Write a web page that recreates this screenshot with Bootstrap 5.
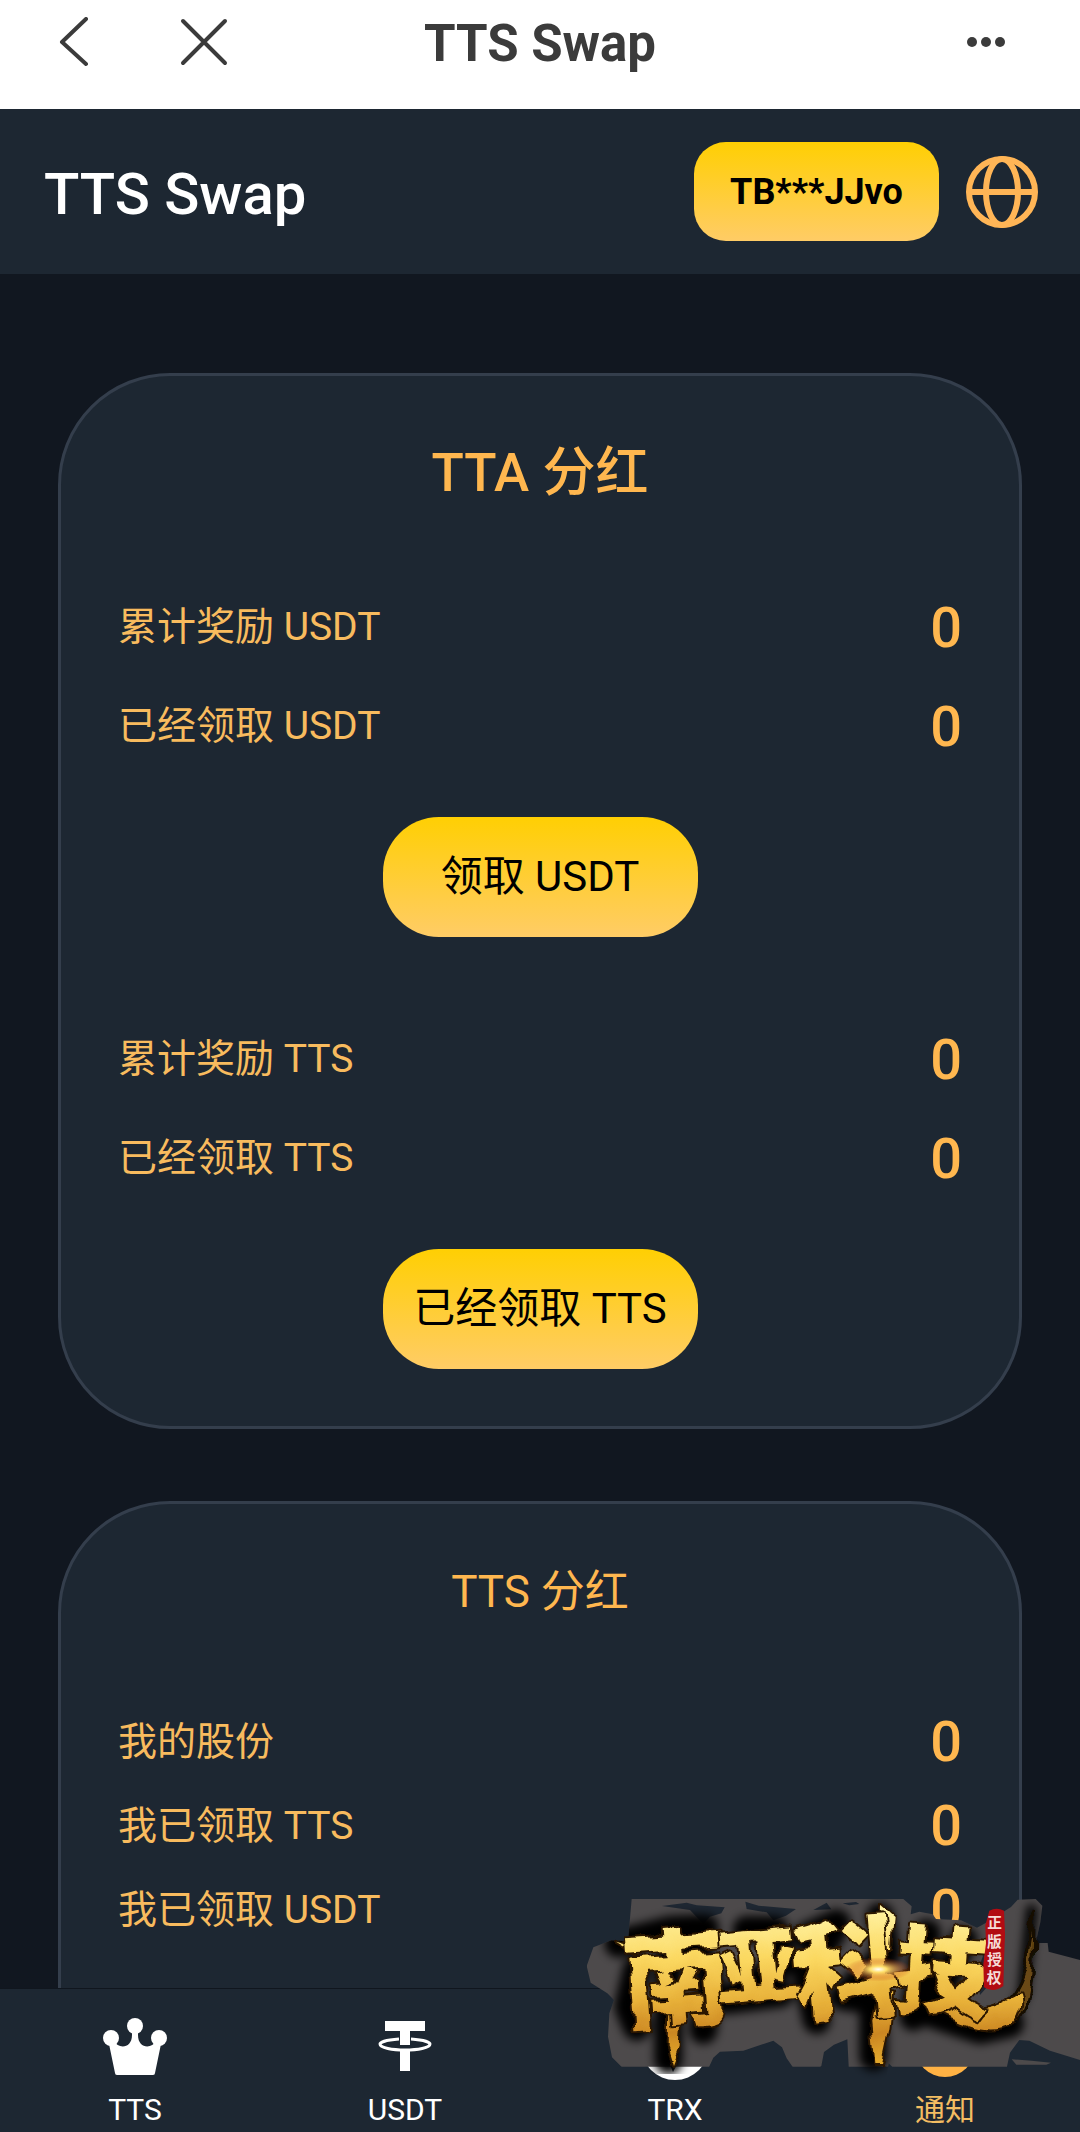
<!DOCTYPE html>
<html lang="zh-CN">
<head>
<meta charset="utf-8">
<meta name="viewport" content="width=device-width, initial-scale=1">
<title>TTS Swap</title>
<link rel="stylesheet" href="https://cdn.jsdelivr.net/npm/bootstrap@5.3.0/dist/css/bootstrap.min.css">
<script src="https://cdn.jsdelivr.net/npm/bootstrap@5.3.0/dist/js/bootstrap.bundle.min.js"></script>
<style>
  :root { --panel: #1d2732; --night: #111720; --gold: #ffb74f; --line: #343e4c; }
  body { font-family: Roboto, "Noto Sans CJK SC", sans-serif; background: var(--night); color: #fff; }
  .plain-btn { background: none; border: 0; padding: 0; line-height: 0; }
  .app-top { height: 109px; padding: 0 56px 26px; background: #fff; color: #3b3b3b; }
  .app-side { flex: 1 1 0; gap: 88px; }
  .app-title { font-size: 51px; line-height: 60px; font-weight: 700; margin: 0; padding-top: 4px; }
  .brand-bar { height: 165px; padding: 0 42px 0 44px; background: var(--panel); }
  .brand-name { font-size: 58px; line-height: 70px; font-weight: 500; color: #fff; text-decoration: none; padding-top: 4px; }
  .gold-btn { background: linear-gradient(#ffcf03, #ffcc66); color: #000; border: 0; }
  .wallet-btn { width: 245px; height: 99px; border-radius: 32px; font-size: 36px; font-weight: 700; }
  .feed { overflow-y: auto; scrollbar-width: none; padding: 99px 58px 0; gap: 72px; min-height: 0; }
  .feed::-webkit-scrollbar { display: none; }
  .bonus { flex: none; background: var(--panel); border: 3px solid var(--line); border-radius: 112px; padding: 56px 57px; color: var(--gold); }
  .bonus h2 { font-size: 53px; line-height: 82px; font-weight: 500; margin: 0 0 64px; }
  .bonus h2.light-title { font-size: 44px; line-height: 64px; font-weight: 400; margin-bottom: 76px; }
  .figure-row { height: 99px; font-size: 39px; }
  .figure-row dt { font-weight: 400; color: #f8bb5e; }
  .figure-row dd { margin: 0; font-size: 56px; font-weight: 500; }
  .tight { margin-bottom: 120px; }
  .tight .figure-row { height: 84px; }
  .claim-btn { width: 315px; height: 120px; border-radius: 56px; font-size: 42px; padding: 0 0 2px; margin: 41px 0 73px; }
  .claim-last { margin-bottom: 1px; }
  .tabs { height: 144px; background: var(--panel); border-top: 1px solid #10161e; flex: none; }
  .tab-link { flex: 1 1 0; color: #fff; text-decoration: none; font-size: 30px; line-height: 36px; padding-top: 21px; gap: 12px; }
  .tab-link.active { color: #f3bd62; }
  .stamp-logo { right: 0; bottom: 0; width: 520px; height: 272px; pointer-events: none; }
</style>
</head>
<body>
<div class="d-flex flex-column vh-100 overflow-hidden position-relative">
  <header class="app-top d-flex align-items-center flex-shrink-0">
    <div class="app-side d-flex align-items-center">
      <button class="plain-btn" type="button" aria-label="返回"><svg width="36" height="50" viewBox="0 0 36 50" fill="none" stroke="#3b3b3b" stroke-width="4" stroke-linecap="round" stroke-linejoin="round"><path d="M30 2 6 25l24 22"/></svg></button>
      <button class="plain-btn" type="button" aria-label="关闭"><svg width="48" height="48" viewBox="0 0 48 48" fill="none" stroke="#3b3b3b" stroke-width="4" stroke-linecap="round"><path d="M3 3l42 42M45 3 3 45"/></svg></button>
    </div>
    <h1 class="app-title">TTS Swap</h1>
    <div class="app-side d-flex justify-content-end">
      <button class="plain-btn" type="button" aria-label="更多"><svg width="58" height="12" viewBox="0 0 58 12" fill="#3b3b3b"><circle cx="6" cy="6" r="5"/><circle cx="20" cy="6" r="5"/><circle cx="34" cy="6" r="5"/></svg></button>
    </div>
  </header>

  <nav class="brand-bar d-flex align-items-center flex-shrink-0">
    <a class="brand-name me-auto" href="#">TTS Swap</a>
    <button class="gold-btn wallet-btn" type="button">TB***JJvo</button>
    <button class="plain-btn ms-4" type="button" aria-label="语言"><svg width="75" height="72" viewBox="0 0 75 72" fill="none" stroke="#ffb556" stroke-width="6"><circle cx="39" cy="36" r="33"/><ellipse cx="39" cy="36" rx="16" ry="33"/><path d="M6 36h66"/></svg></button>
  </nav>

  <main class="feed d-flex flex-column flex-grow-1">
    <section class="bonus text-center">
      <h2>TTA 分红</h2>
      <dl class="m-0">
        <div class="figure-row d-flex align-items-center justify-content-between"><dt>累计奖励 USDT</dt><dd>0</dd></div>
        <div class="figure-row d-flex align-items-center justify-content-between"><dt>已经领取 USDT</dt><dd>0</dd></div>
      </dl>
      <button class="gold-btn claim-btn" type="button">领取 USDT</button>
      <dl class="m-0">
        <div class="figure-row d-flex align-items-center justify-content-between"><dt>累计奖励 TTS</dt><dd>0</dd></div>
        <div class="figure-row d-flex align-items-center justify-content-between"><dt>已经领取 TTS</dt><dd>0</dd></div>
      </dl>
      <button class="gold-btn claim-btn claim-last" type="button">已经领取 TTS</button>
    </section>
    <section class="bonus text-center">
      <h2 class="light-title">TTS 分红</h2>
      <dl class="tight">
        <div class="figure-row d-flex align-items-center justify-content-between"><dt>我的股份</dt><dd>0</dd></div>
        <div class="figure-row d-flex align-items-center justify-content-between"><dt>我已领取 TTS</dt><dd>0</dd></div>
        <div class="figure-row d-flex align-items-center justify-content-between"><dt>我已领取 USDT</dt><dd>0</dd></div>
      </dl>
    </section>
  </main>

  <nav class="tabs d-flex">
    <a class="tab-link d-flex flex-column align-items-center" href="#">
      <svg width="70" height="70" viewBox="0 0 70 70" fill="#fff"><circle cx="35" cy="16" r="8"/><circle cx="11" cy="28" r="8"/><circle cx="59" cy="28" r="8"/><path d="M9 34 14 31C18 39 32 39 32 25V19h6v6C38 39 52 39 56 31l5 3-6 29q0 2-2 2H17q-2 0-2-2z"/></svg>
      <span>TTS</span></a>
    <a class="tab-link d-flex flex-column align-items-center" href="#">
      <svg width="70" height="70" viewBox="0 0 70 70" fill="#fff"><path d="M15 11h40v10H40v14H30V21H15zM30 40h10v21H30z"/><path d="M29 29C14 30 10 33 10 34c0 8 50 8 50 0 0-1-4-4-19-5" fill="none" stroke="#fff" stroke-width="3"/></svg>
      <span>USDT</span></a>
    <a class="tab-link d-flex flex-column align-items-center" href="#">
      <svg width="70" height="70" viewBox="0 0 70 70"><circle cx="35" cy="36" r="34" fill="#fff"/><path d="M15 19 52 26 33 62z" fill="#1e2732"/></svg>
      <span>TRX</span></a>
    <a class="tab-link active d-flex flex-column align-items-center" href="#" aria-current="page">
      <svg width="70" height="70" viewBox="0 0 70 70"><circle cx="35" cy="37" r="30" fill="#ffb244"/><path d="M12 34c8-3 14 2 22 5s14 6 19 14q-8-1-12 1l-7-4-8-1-12-6z" fill="#fff"/></svg>
      <span>通知</span></a>
  </nav>

  <svg class="stamp-logo position-absolute" viewBox="0 0 1560 816" role="img" aria-label="南亚科技">
    <defs>
      <linearGradient id="foil" x1="0" y1="150" x2="0" y2="600" gradientUnits="userSpaceOnUse">
        <stop offset="0" stop-color="#fff3a4"/><stop offset=".32" stop-color="#fbd860"/><stop offset=".6" stop-color="#e8b139"/><stop offset=".82" stop-color="#cb8622"/><stop offset="1" stop-color="#e0a52c"/>
      </linearGradient>
      <filter id="ink" x="-10%" y="-20%" width="120%" height="140%"><feGaussianBlur stdDeviation="14"/></filter>
      <filter id="rough" x="-5%" y="-5%" width="110%" height="110%"><feTurbulence type="fractalNoise" baseFrequency=".014" numOctaves="2" seed="7" result="n"/><feDisplacementMap in="SourceGraphic" in2="n" scale="40" xChannelSelector="R" yChannelSelector="G"/></filter>
      <radialGradient id="glint"><stop offset="0" stop-color="#fff"/><stop offset=".25" stop-color="#ffe06a"/><stop offset="1" stop-color="#c0340e" stop-opacity="0"/></radialGradient>
      <clipPath id="mist"><path d="M215 117H1030l25 22-3 24 26-8 40 8 10 14 75 4 48 22 22-12 80-50 20-22 54-2 20 20-6 50-14 62h36l3 26 94 25v300l-90-28-62-30-30-2-28 38-10 46-68 20-124 0-20-14-122 0-20-20-8 50H868l-6-122-40 16-30 22-8 42-26 20-50-3-28-40-14-33-26-20-90 30-70 3-20 18-20 43-10 6H240l-8-15-46-5-30-30-12-62 4-70 14-40-20-20-50-32-12-50 20-56 54-21 50 2z"/></clipPath>
    </defs>
    <g clip-path="url(#mist)">
      <path fill="#4d4a4b" d="M80 110h1480v510H80z"/>
      <path fill="#1e2732" d="M306 138 380 128l30 8 84 6-10 18-34 10-20 22-40-42zM556 125l40 12 112 10-30 20-38 14-20-24-60-10zM760 150l40-22 14 20zM848 130l40-4 10 6-30 4zM1250 340l22-60 6 105-18 20z"/>
      <g filter="url(#ink)" fill="none" stroke="#000" stroke-width="84" stroke-linejoin="round" stroke-linecap="round">
        <path d="M175 250 330 210 435 205 400 270 450 330 430 510M230 330 205 440 230 500M325 300V600M560 210H645L670 310 500 420 660 400M740 230 830 190 740 350 770 480M960 170 980 280 850 410 940 420V590M1100 220 1060 470M1210 240 1110 460 1260 510 1350 490"/>
        <path d="M1350 480 1390 400 1415 150" stroke-width="34"/>
      </g>
    </g>
    <path d="M1355 598l60 4 58 6-14 6h-90z" fill="#4d4a4b"/>
    <g filter="url(#rough)">
      <!-- brush tips trailing off the characters -->
      <path d="M1240 440C1300 450 1370 440 1398 300L1420 150C1424 300 1416 440 1376 474" fill="#6b4a14" stroke="#120b04" stroke-width="10"/>
      <g fill="url(#foil)" stroke="#2c1804" stroke-width="12" stroke-linejoin="round" paint-order="stroke" font-family="'Noto Sans CJK SC', sans-serif" font-weight="900">
        <path d="M165 248 215 262 300 224 330 240 290 272 222 282z"/>
        <path d="M322 430h42l-8 130-20 52-16-50z"/>
        <path d="M950 400h50l-12 110-22 102h-20l-12-130z"/>
        <path d="M960 132 998 165 990 270H958z"/>
        <path d="M1150 425C1215 455 1300 452 1376 400 1392 450 1364 480 1342 500 1290 524 1230 510 1130 460z"/>
        <text x="188" y="476" font-size="320" transform="rotate(-4 340 380)">南</text>
        <text x="468" y="408" font-size="245" transform="rotate(-5 590 310)">亚</text>
        <text x="702" y="448" font-size="325" transform="rotate(-5 860 340)">科</text>
        <text x="1000" y="446" font-size="290" transform="rotate(4 1150 360)">技</text>
      </g>
    </g>
    <ellipse cx="955" cy="328" rx="100" ry="36" fill="url(#glint)"/>
    <path d="M1288 152q22-12 44 0l3 70-3 82-2 74q-30 22-58 4l-2-70 8-62-2-54z" fill="#b20b12"/>
    <g fill="#f6dcd8" font-family="'Noto Sans CJK SC', sans-serif" font-size="44" font-weight="700" text-anchor="middle">
      <text x="1304" y="204">正</text><text x="1303" y="260">版</text><text x="1304" y="315">授</text><text x="1302" y="370">权</text>
    </g>
  </svg>
</div>
</body>
</html>
